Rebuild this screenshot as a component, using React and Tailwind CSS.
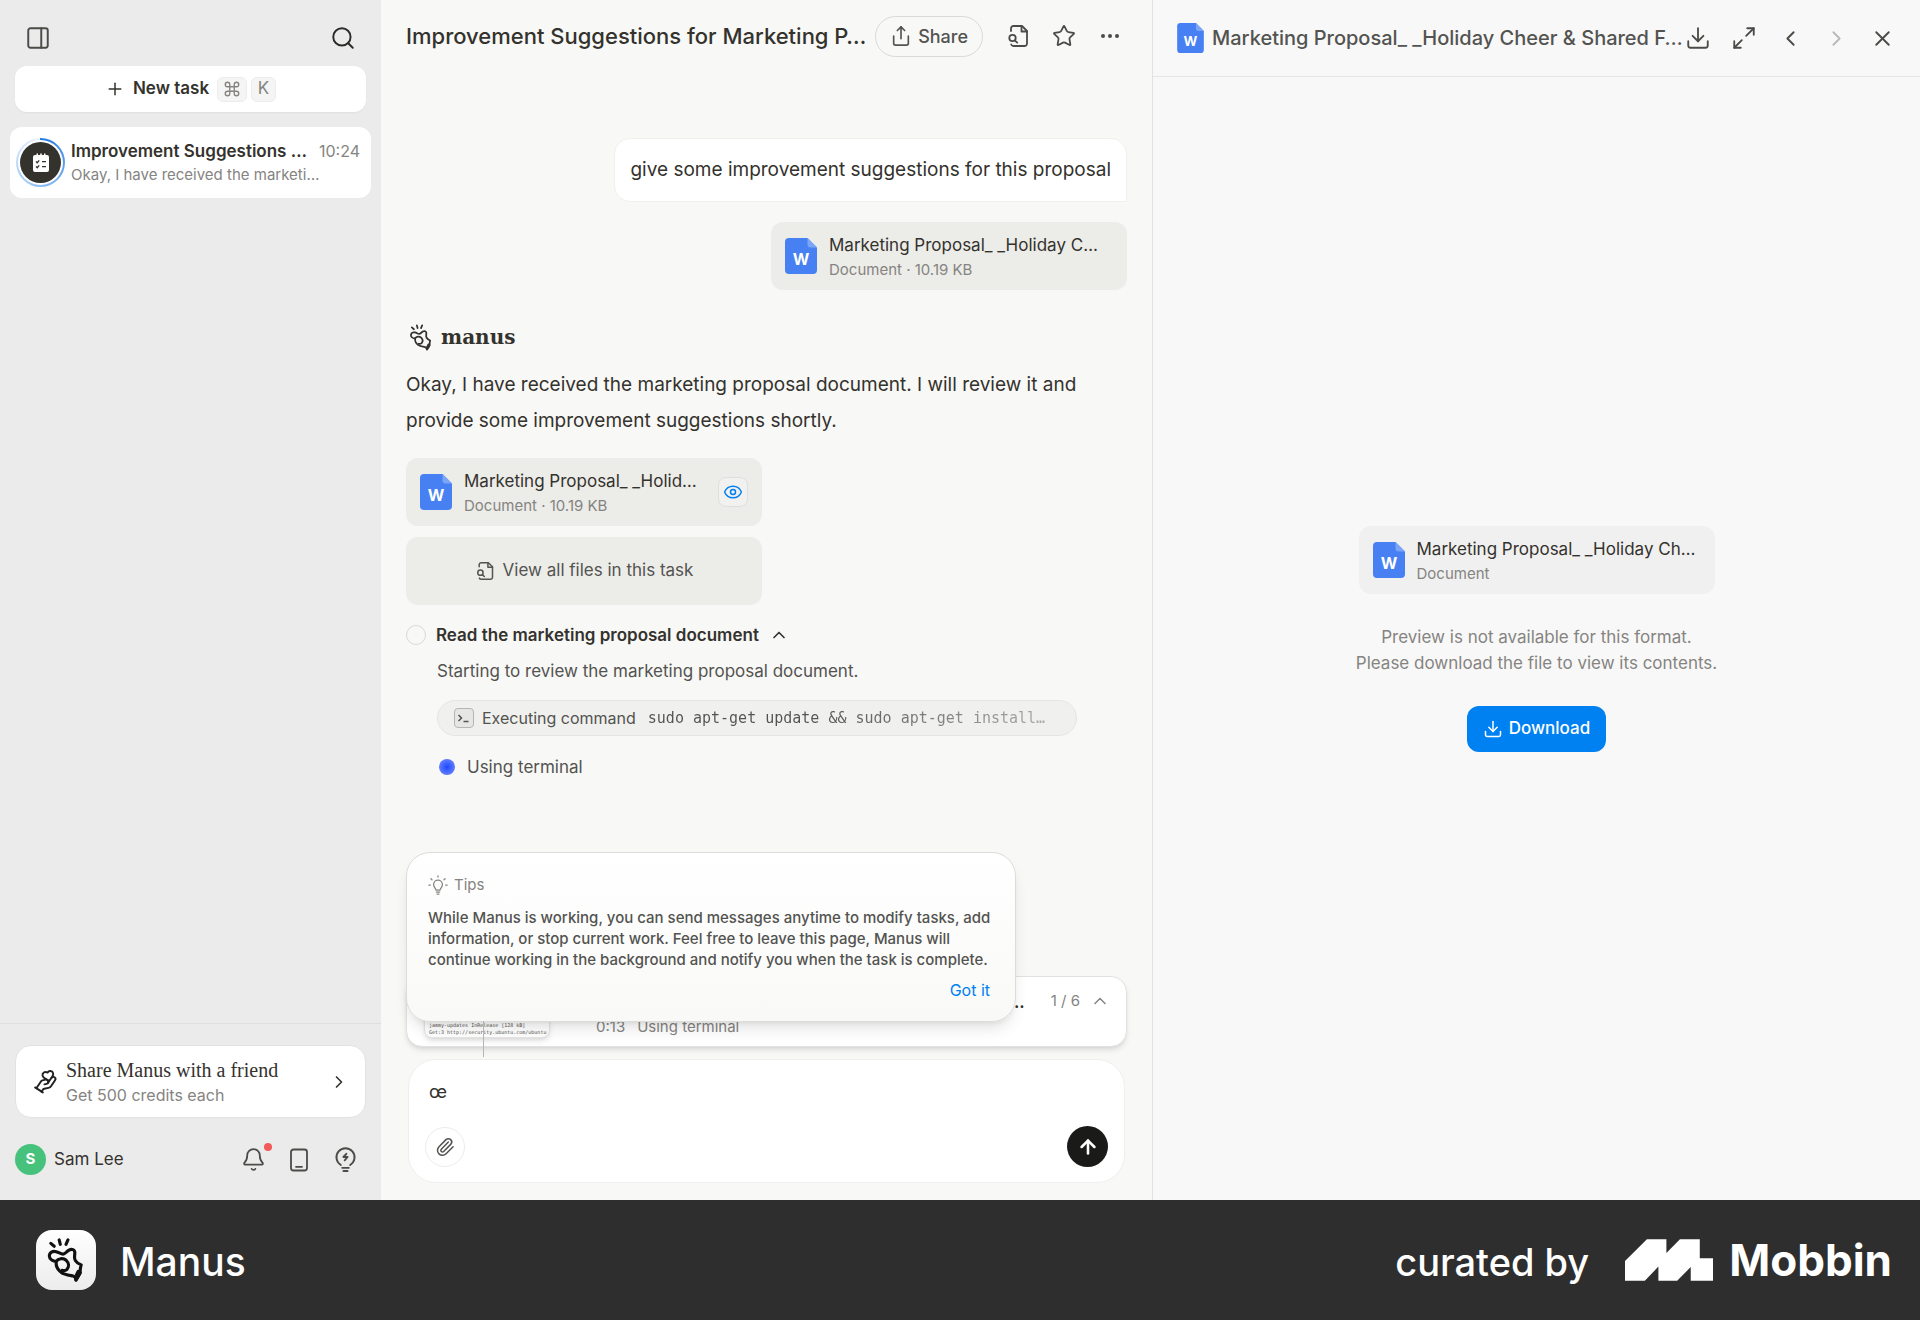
import {
  ArrowUp,
  Bell,
  ChevronLeft,
  ChevronRight,
  ChevronUp,
  Command,
  Download,
  Ellipsis,
  Eye,
  HandHeart,
  Maximize2,
  PanelRight,
  Paperclip,
  Plus,
  Search,
  Share,
  Star,
  X
} from 'lucide-react';
import { useState } from 'react';

function ManusMark({ className, strokeWidth = 3.2 }) {
  return (
    <svg viewBox="10 5 40 49" className={className} fill="none" stroke="currentColor" strokeWidth={strokeWidth} strokeLinecap="round" strokeLinejoin="round" aria-hidden="true">
      <path d="M14.500 12.500l3.500 3M23 9l1.200 4.500M32 9l-2 4.500" />
      <path d="M20 31c-3 0-7-2-7-5.500 0-4 3.500-5.500 7-4.500 3 .8 4.500 2.500 7 2.500 2 0 3.500-2.500 6-4 3-1.800 6-.5 6 2.500 0 3-1 5.500.5 8 1.500 2.500 3.500 3.500 6 4.500-.8 3-1.500 5-.8 8l-4.200 7c-.5-2-1.500-3-3.500-3.800-4-.7-9-1.200-12-3.700-4-3-5.500-6.500-5-11z" />
      <path d="M20 31c2-3 7-4 10.200-1.200 3 2.800 3 6.600.8 9.200-1.200 1.200-2.700 1.700-5 1.100" />
      <path d="M42.500 41l.5 4-3 5-.5-3z" fill="currentColor" />
    </svg>
  );
}

function WordIcon({ className }) {
  return (
    <svg viewBox="0 0 32 36" className={className} aria-hidden="true">
      <path d="M4 0h18.500L32 9.500V32a4 4 0 0 1-4 4H4a4 4 0 0 1-4-4V4a4 4 0 0 1 4-4z" fill="#4680f2" />
      <path d="M22.500 0L32 9.500h-6.500a3 3 0 0 1-3-3z" fill="#7ba6f7" />
      <text x="16" y="27" textAnchor="middle" fontFamily="Inter, sans-serif" fontSize="16" fontWeight="700" fill="#fff">
        W
      </text>
    </svg>
  );
}

function FileSearchIcon({ className }) {
  return (
    <svg viewBox="0 0 24 24" className={className} fill="none" stroke="currentColor" strokeWidth="1.8" strokeLinecap="round" strokeLinejoin="round" aria-hidden="true">
      <path d="M5 7V4.500A2.500 2.500 0 0 1 7.500 2H16l5 5v12.500a2.500 2.500 0 0 1-2.500 2.500h-11A2.500 2.500 0 0 1 5.200 20.500" />
      <path d="M15.500 2v5.500H21" />
      <circle cx="6.500" cy="14" r="3.200" />
      <path d="M8.800 16.400l2.400 2.200" />
    </svg>
  );
}

function PhoneIcon({ className }) {
  return (
    <svg viewBox="0 0 24 24" className={className} fill="none" stroke="currentColor" strokeWidth="1.8" strokeLinecap="round" aria-hidden="true">
      <rect x="4" y="1.500" width="16" height="21" rx="2.500" />
      <path d="M9 18.800h6" />
    </svg>
  );
}

function CreditBulbIcon({ className }) {
  return (
    <svg viewBox="0 0 24 24" className={className} fill="none" stroke="currentColor" strokeWidth="1.800" strokeLinecap="round" strokeLinejoin="round" aria-hidden="true">
      <path d="M7.500 17.300a8.700 8.700 0 1 1 9 0" />
      <path d="M12.800 6.500L10 9.600h4l-2.800 3.200" />
      <path d="M8.800 20h6.400M10 23h4" />
    </svg>
  );
}

function TipIcon({ className }) {
  return (
    <svg viewBox="0 0 24 24" className={className} fill="none" stroke="currentColor" strokeWidth="1.500" strokeLinecap="round" strokeLinejoin="round" aria-hidden="true">
      <path d="M9.500 18c0-1.800-2.800-3.200-2.800-6.600a5.300 5.300 0 0 1 10.600 0c0 3.400-2.800 4.800-2.800 6.600z" />
      <path d="M10 20.500h4M11 23h2" />
      <path d="M12 1v1.500M3.500 4.500l1.300 1.200M20.500 4.500l-1.300 1.200M1 12h1.800M21.200 12H23" />
    </svg>
  );
}

function ChecklistIcon({ className }) {
  return (
    <svg viewBox="0 0 18 20" className={className} aria-hidden="true">
      <path d="M3 2h1.500V.500h1.500V2h2.200V.500h1.600V2H12V.500h1.500V2H15a2 2 0 0 1 2 2v13a2 2 0 0 1-2 2H3a2 2 0 0 1-2-2V4a2 2 0 0 1 2-2z" fill="#fff" />
      <path d="M4 8.500l1.200 1.200 2-2.400M4 13.500l1.200 1.200 2-2.400M10 8.700h4M10 13.700h4" fill="none" stroke="#34322d" strokeWidth="1.300" />
    </svg>
  );
}

function MobbinMark({ className }) {
  return (
    <svg viewBox="0 0 253 120" className={className} fill="#fff" aria-hidden="true">
      <path d="M63 0H119V40L158 0H215V55H253V120H189V80L150 120H96V79L57 120H0V63Z" />
    </svg>
  );
}

function IconButton({ label, children, disabled }) {
  return (
    <button aria-label={label} disabled={disabled} className="flex size-[26px] shrink-0 items-center justify-center text-[#4b4b48] disabled:text-[#b9b9b7]">
      {children}
    </button>
  );
}

function FileCard({ name, meta, tone = 'bg-[#ecece9]', children }) {
  return (
    <div className={`flex h-[68px] w-[356px] items-center gap-3 rounded-xl px-3.5 ${tone}`}>
      <WordIcon className="h-9 w-8 shrink-0" />
      <div className="min-w-0 flex-1 pt-0.5">
        <p className="truncate text-[17px] leading-[26px] text-[#34322d]">{name}</p>
        <p className="text-[15px] leading-6 text-[#858481]">{meta}</p>
      </div>
      {children}
    </div>
  );
}

function Sidebar() {
  return (
    <aside className="flex flex-col bg-[#ebebeb]">
      <div className="flex items-center justify-between px-[25px] pt-[25px] pb-[15px]">
        <IconButton label="Toggle sidebar">
          <PanelRight size={26} strokeWidth={1.8} />
        </IconButton>
        <IconButton label="Search">
          <Search size={26} strokeWidth={1.8} className="text-[#2b2b29]" />
        </IconButton>
      </div>

      <button className="mx-[15px] flex h-[46px] items-center justify-center rounded-xl bg-white text-[17px] font-semibold text-[#34322d] shadow-xs">
        <Plus size={20} strokeWidth={1.8} />
        <span className="mr-2 ml-2">New task</span>
        <kbd className="mr-1 flex h-[25px] w-[30px] items-center justify-center rounded-md border border-[#ececec] bg-[#f5f5f5] text-[#858481]">
          <Command size={18} strokeWidth={1.8} />
        </kbd>
        <kbd className="flex h-[25px] w-[25px] items-center justify-center rounded-md border border-[#ececec] bg-[#f5f5f5] font-['Inter',sans-serif] text-[17px] font-normal text-[#858481]">K</kbd>
      </button>

      <a href="#task" className="mx-[10px] mt-[15px] flex h-[71px] items-center gap-1.5 rounded-xl bg-white pr-[11px] pl-1.5">
        <span className="flex size-[49px] shrink-0 items-center justify-center rounded-full bg-conic from-[#1d7be0] via-[#8fc0f5] to-[#eef5fd]">
          <span className="flex size-[45px] items-center justify-center rounded-full bg-white">
            <span className="flex size-[41px] items-center justify-center rounded-full bg-[#34322d]">
              <ChecklistIcon className="h-5 w-[18px]" />
            </span>
          </span>
        </span>
        <span className="min-w-0 flex-1">
          <span className="flex items-center justify-between leading-6">
            <span className="text-[17px] font-semibold whitespace-nowrap text-[#34322d]">Improvement Suggestions …</span>
            <span className="text-[16px] text-[#858481]">10:24</span>
          </span>
          <span className="block text-[15px] leading-6 text-[#858481]">Okay, I have received the marketi…</span>
        </span>
      </a>

      <div className="mt-auto border-t border-[#dfdfdf] px-[15px] pt-[21px] pb-[25px]">
        <a href="#share" className="flex h-[73px] items-center rounded-2xl border border-[#e2e2e2] bg-white pr-4 pl-4">
          <HandHeart size={26} strokeWidth={1.8} className="-rotate-12 text-[#222220]" />
          <span className="ml-2 flex-1">
            <span className="block font-['Liberation_Serif',serif] text-[20px] leading-[26px] text-[#34322d]">Share Manus with a friend</span>
            <span className="block text-[16px] leading-6 text-[#858481]">Get 500 credits each</span>
          </span>
          <ChevronRight size={20} strokeWidth={2} className="text-[#34322d]" />
        </a>
        <div className="mt-[26px] flex items-center">
          <span className="flex size-[31px] items-center justify-center rounded-full bg-[#47c27c] text-[15px] font-bold text-white">S</span>
          <span className="ml-2 flex-1 text-[17px] text-[#34322d]">Sam Lee</span>
          <div className="flex gap-5 pr-2">
            <div className="relative flex">
              <IconButton label="Notifications">
                <Bell size={25} strokeWidth={1.7} />
              </IconButton>
              <span className="absolute -top-1 -right-1.5 size-2 rounded-full bg-[#f25a5a]" />
            </div>
            <IconButton label="Mobile app">
              <PhoneIcon className="size-6" />
            </IconButton>
            <IconButton label="Credits">
              <CreditBulbIcon className="size-[25px]" />
            </IconButton>
          </div>
        </div>
      </div>
    </aside>
  );
}

function Tips({ onClose }) {
  return (
    <div className="absolute bottom-6 -left-px z-10 h-[170px] w-[610px] rounded-3xl border border-[#dcdcdb] bg-linear-to-b from-white to-[#f9f9f8] px-[21px] pt-5 shadow-lg">
      <div className="flex items-center gap-1.5 text-[15px] leading-6 text-[#858481]">
        <TipIcon className="size-5" />
        Tips
      </div>
      <p className="mt-2.5 text-[15px] leading-[21px] font-medium text-[#535350]">
        While Manus is working, you can send messages anytime to modify tasks, add
        <br />
        information, or stop current work. Feel free to leave this page, Manus will
        <br />
        continue working in the background and notify you when the task is complete.
      </p>
      <div className="mt-2 flex justify-end pr-1">
        <button onClick={onClose} className="text-[16px] leading-6 text-[#0081f2]">
          Got it
        </button>
      </div>
      <span className="absolute top-full left-[76px] h-9 w-px bg-[#b5b5b3]" />
    </div>
  );
}

function Chat() {
  const [message, setMessage] = useState('œ');
  const [showTips, setShowTips] = useState(true);

  return (
    <main className="flex min-w-0 flex-col bg-[#f8f8f7] px-[25px]">
      <header className="flex h-[72px] items-center">
        <h1 className="min-w-0 flex-1 truncate text-[22px] font-medium text-[#34322d]">Improvement Suggestions for Marketing P…</h1>
        <button className="flex h-[41px] items-center gap-1.5 rounded-full border border-[#d9d9d7] px-3.5 text-[18px] font-medium text-[#535350]">
          <Share size={22} strokeWidth={1.8} />
          Share
        </button>
        <div className="ml-[22px] flex gap-5 pr-1">
          <IconButton label="Files">
            <FileSearchIcon className="size-6" />
          </IconButton>
          <IconButton label="Favorite">
            <Star size={24} strokeWidth={1.8} />
          </IconButton>
          <IconButton label="More">
            <Ellipsis size={24} strokeWidth={2} />
          </IconButton>
        </div>
      </header>

      <section className="flex flex-col pt-[66px]">
        <div className="self-end rounded-2xl rounded-br-none border border-[#f0f0ef] bg-white px-[15px] py-[13px] text-[19px] leading-9 text-[#34322d]">
          give some improvement suggestions for this proposal
        </div>
        <div className="mt-5 self-end">
          <FileCard name="Marketing Proposal_ _Holiday C…" meta="Document · 10.19 KB" />
        </div>

        <div className="mt-8 flex items-center gap-2 text-[#34322d]">
          <ManusMark className="ml-[3px] h-[29px] w-6" strokeWidth={3} />
          <span className="font-['DejaVu_Serif',serif] text-[20px] leading-[30px] font-bold">manus</span>
        </div>
        <p className="mt-[15px] text-[19px] leading-9 text-[#34322d]">
          Okay, I have received the marketing proposal document. I will review it and
          <br />
          provide some improvement suggestions shortly.
        </p>

        <div className="mt-[19px] flex flex-col items-start gap-[11px]">
          <FileCard name="Marketing Proposal_ _Holid…" meta="Document · 10.19 KB">
            <button aria-label="Preview" className="flex size-[30px] shrink-0 items-center justify-center rounded-lg border border-[#dfdfdd] bg-[#f1f1ef] text-[#0081f2]">
              <Eye size={20} strokeWidth={1.8} />
            </button>
          </FileCard>
          <button className="flex h-[68px] w-[356px] items-center justify-center gap-2 rounded-xl bg-[#ecece9] text-[17px] text-[#535350]">
            <FileSearchIcon className="size-5" />
            View all files in this task
          </button>
        </div>

        <div className="mt-[17px] flex items-center text-[17px] leading-[26px] font-semibold text-[#34322d]">
          <span className="mr-2.5 size-5 rounded-full border border-[#d9d9d7]" />
          Read the marketing proposal document
          <ChevronUp size={20} className="ml-2.5" strokeWidth={2} />
        </div>
        <div className="flex flex-col pl-[31px] text-[17px] leading-[26px] text-[#535350]">
          <p className="mt-2.5">Starting to review the marketing proposal document.</p>
          <div className="mt-4 flex h-9 w-[640px] items-center rounded-full border border-[#e5e5e3] bg-[#f0f0ee] px-4">
            <svg viewBox="0 0 20 20" className="size-5 shrink-0" fill="none" aria-hidden="true">
              <rect x="0.500" y="0.500" width="19" height="19" rx="3.500" fill="#e6e6e4" stroke="#b5b5b3" />
              <path d="M4.500 7l3 3-3 3M9.500 13.500h5" stroke="#535350" strokeWidth="1.500" />
            </svg>
            <span className="ml-2 text-[16px]">Executing command</span>
            <code className="ml-3 bg-linear-to-r from-[#535350] from-40% to-[#a9a9a7] bg-clip-text font-['DejaVu_Sans_Mono',monospace] text-[15px] text-transparent">
              {'sudo apt-get update && sudo apt-get install…'}
            </code>
          </div>
          <div className="mt-[18px] flex items-center">
            <span className="mr-3 ml-0.5 size-4 rounded-full bg-radial from-[#1c46ff] to-[#7d8dff]" />
            Using terminal
          </div>
        </div>
      </section>

      <footer className="mt-auto pb-[17px]">
        <div className="relative flex h-[71px] rounded-2xl border border-[#e2e2e0] bg-white shadow-md">
          {showTips && <Tips onClose={() => setShowTips(false)} />}
          <div className="ml-[17px] flex h-[61px] w-[126px] shrink-0 flex-col justify-end rounded-lg border border-[#e5e5e3] bg-white pb-px pl-1 font-['DejaVu_Sans_Mono',monospace] text-[5px] leading-[7px] whitespace-pre text-[#535350] shadow-md">
            <span>jammy-updates InRelease [128 kB]</span>
            <span>Get:3 http://security.ubuntu.com/ubuntu</span>
          </div>
          <div className="ml-[46px] min-w-0 flex-1 pt-3 leading-[26px]">
            <p className="text-right text-[17px] font-semibold text-[#34322d]">Read the marketing proposal document...</p>
            <p className="flex gap-3 text-[15px] leading-[24px] text-[#858481]">
              <span>0:13</span>
              <span>Using terminal</span>
            </p>
          </div>
          <div className="mt-[11px] mr-4 ml-[26px] flex h-[26px] items-center gap-2.5 text-[15px] text-[#858481]">
            1 / 6
            <ChevronUp size={20} strokeWidth={1.8} />
          </div>
        </div>

        <div className="mx-0.5 mt-3 flex h-[124px] flex-col rounded-[28px] border border-[#efefee] bg-white px-4 pb-[15px]">
          <textarea
            aria-label="Message"
            rows={1}
            value={message}
            onChange={(event) => setMessage(event.target.value)}
            className="mt-4 ml-1 resize-none text-[18px] leading-8 text-[#34322d] outline-none"
          />
          <div className="mt-auto flex items-center justify-between">
            <button aria-label="Attach file" className="flex size-10 items-center justify-center rounded-full border border-[#ececeb] text-[#535350]">
              <Paperclip size={20} strokeWidth={1.8} />
            </button>
            <button aria-label="Send" className="flex size-[41px] items-center justify-center rounded-full bg-[#1a1a19] text-white">
              <ArrowUp size={22} strokeWidth={2.8} />
            </button>
          </div>
        </div>
      </footer>
    </main>
  );
}

function Preview() {
  return (
    <section className="flex min-w-0 flex-col border-l border-[#e2e2e2] bg-[#f8f8f8]">
      <header className="flex h-[77px] items-center border-b border-[#e5e5e5] pr-[25px] pl-6">
        <WordIcon className="h-[30px] w-[27px] shrink-0" />
        <h2 className="ml-2 min-w-0 flex-1 truncate text-[20px] font-medium text-[#535350]">Marketing Proposal_ _Holiday Cheer &amp; Shared F…</h2>
        <div className="flex gap-5">
          <IconButton label="Download file">
            <Download size={26} strokeWidth={1.7} />
          </IconButton>
          <IconButton label="Full screen">
            <Maximize2 size={26} strokeWidth={1.7} />
          </IconButton>
          <IconButton label="Previous">
            <ChevronLeft size={25} strokeWidth={1.8} />
          </IconButton>
          <IconButton label="Next" disabled>
            <ChevronRight size={25} strokeWidth={1.8} />
          </IconButton>
          <IconButton label="Close">
            <X size={25} strokeWidth={1.8} />
          </IconButton>
        </div>
      </header>

      <div className="flex flex-1 flex-col items-center justify-center">
        <FileCard name="Marketing Proposal_ _Holiday Ch…" meta="Document" tone="bg-[#f0f0f0]" />
        <p className="mt-[30px] text-center text-[17px] leading-[26px] text-[#858481]">
          Preview is not available for this format.
          <br />
          Please download the file to view its contents.
        </p>
        <button className="mt-[30px] flex h-[46px] items-center gap-1.5 rounded-xl bg-[#0081f2] px-4 text-[17px] font-medium text-white">
          <Download size={20} strokeWidth={1.8} />
          Download
        </button>
      </div>
    </section>
  );
}

function App() {
  return (
    <div className="flex min-h-screen flex-col font-['Inter',sans-serif]">
      <div className="grid flex-1 grid-cols-[381px_771fr_768fr]">
        <Sidebar />
        <Chat />
        <Preview />
      </div>
      <footer className="flex h-[120px] items-center justify-between bg-[#2e2e2e] pr-7 pl-9 text-white">
        <div className="flex items-center gap-6">
          <div className="flex size-[60px] items-center justify-center rounded-2xl bg-linear-to-b from-white to-[#ececec] text-[#111]">
            <ManusMark className="h-12 w-10" />
          </div>
          <span className="pt-1 text-[39px] font-medium">Manus</span>
        </div>
        <div className="flex items-center">
          <span className="pt-1 text-[38px] font-medium">curated by</span>
          <MobbinMark className="mr-4 ml-9 h-[42px] w-[88px]" />
          <span className="text-[44px] font-bold">Mobbin</span>
        </div>
      </footer>
    </div>
  );
}

export default App;
